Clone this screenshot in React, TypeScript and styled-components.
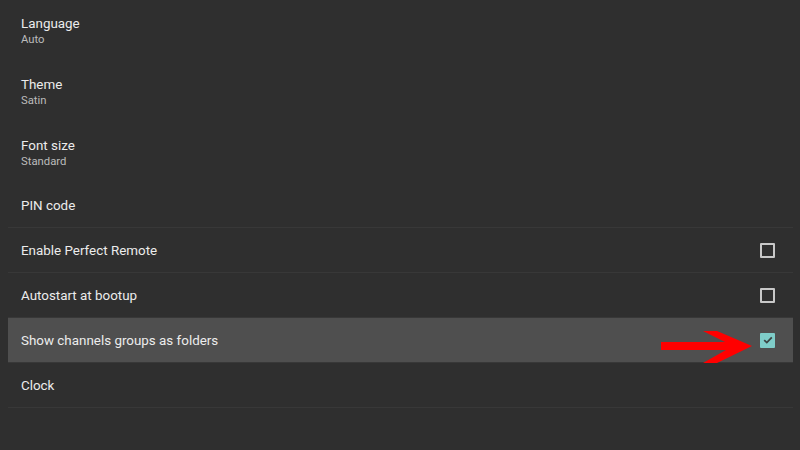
import React from 'react';
import styled, { createGlobalStyle } from 'styled-components';

type settingItem = {
  id: string;
  title: string;
  value?: string;
  checkbox?: boolean;
  checked?: boolean;
  selected?: boolean;
  divider?: boolean;
};

const settings: settingItem[] = [
  { id: 'language', title: 'Language', value: 'Auto' },
  { id: 'theme', title: 'Theme', value: 'Satin' },
  { id: 'fontSize', title: 'Font size', value: 'Standard' },
  { id: 'pin', title: 'PIN code', divider: true },
  { id: 'remote', title: 'Enable Perfect Remote', checkbox: true, divider: true },
  { id: 'autostart', title: 'Autostart at bootup', checkbox: true, divider: true },
  {
    id: 'folders',
    title: 'Show channels groups as folders',
    checkbox: true,
    checked: true,
    selected: true,
    divider: true,
  },
  { id: 'clock', title: 'Clock', divider: true },
];

const GlobalStyle = createGlobalStyle`
  html, body {
    margin: 0;
    padding: 0;
    background: #2f2f2f;
  }
  body {
    font-family: Roboto, "Noto Sans", sans-serif;
    -webkit-font-smoothing: antialiased;
  }
`;

const App = () => {
  return (
    <>
      <GlobalStyle />
      <Screen>
        <List>
          {settings.map((item) => (
            <Row
              key={item.id}
              $tall={!!item.value}
              $selected={!!item.selected}
              $divider={!!item.divider}
            >
              <TextWrap>
                <Title>{item.title}</Title>
                {item.value && <Value>{item.value}</Value>}
              </TextWrap>
              {item.checkbox && (
                <CheckBox $checked={!!item.checked}>
                  {item.checked && (
                    <svg width="10" height="8" viewBox="0 0 10 8">
                      <path
                        d="M1.2 4.2 L3.8 6.6 L8.8 1.4"
                        fill="none"
                        stroke="#3b4443"
                        strokeWidth="1.8"
                      />
                    </svg>
                  )}
                </CheckBox>
              )}
              {item.selected && (
                <Pointer width="96" height="36" viewBox="0 0 96 36">
                  <rect x="0" y="11" width="72" height="8" fill="#ff0000" />
                  <polygon points="42,0 56,0 91,15 56,32 42,32 72,15" fill="#ff0000" />
                </Pointer>
              )}
            </Row>
          ))}
        </List>
      </Screen>
    </>
  );
};

const Screen = styled.div`
  width: 800px;
  height: 450px;
  overflow: hidden;
  background: #2f2f2f;
  padding: 0 7px 0 8px;
  box-sizing: border-box;
`;

const List = styled.div`
  display: flex;
  flex-direction: column;
`;

const Row = styled.div<{ $tall: boolean; $selected: boolean; $divider: boolean }>`
  position: relative;
  display: flex;
  align-items: center;
  justify-content: space-between;
  height: ${(p) => (p.$tall ? '61px' : '45px')};
  padding: 0 18px 0 13px;
  box-sizing: border-box;
  background: ${(p) => (p.$selected ? '#4f4f4f' : 'transparent')};
  border-bottom: 1px solid ${(p) => (p.$divider ? '#383838' : 'transparent')};
`;

const TextWrap = styled.div`
  display: flex;
  flex-direction: column;
  gap: 2px;
  padding-top: 1px;
`;

const Title = styled.div`
  font-size: 13.4px;
  line-height: 15px;
  color: #ececec;
`;

const Value = styled.div`
  font-size: 11.3px;
  line-height: 13px;
  color: #bcbcbc;
`;

const CheckBox = styled.div<{ $checked: boolean }>`
  width: 15px;
  height: 15px;
  box-sizing: border-box;
  border: ${(p) => (p.$checked ? 'none' : '2px solid #c8c8c8')};
  background: ${(p) => (p.$checked ? '#7fcdc9' : 'transparent')};
  border-radius: 1px;
  display: flex;
  align-items: center;
  justify-content: center;
`;

const Pointer = styled.svg`
  position: absolute;
  left: 653px;
  top: 13px;
`;

export default App;
